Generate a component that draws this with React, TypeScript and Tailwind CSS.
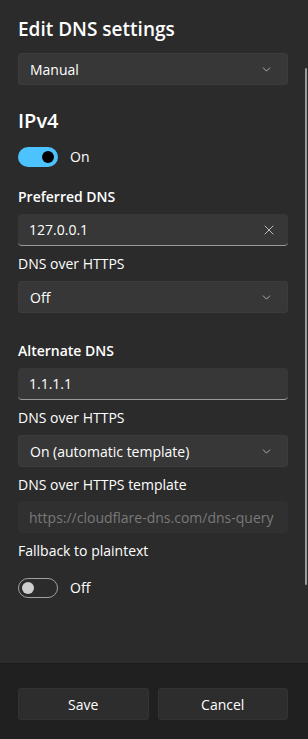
import { ChevronDown, X } from 'lucide-react';

const font = { fontFamily: '"Segoe UI", "Open Sans", "Noto Sans", sans-serif' };

const Dropdown = ({ value }: { value: string }) => (
  <div className="flex h-8 items-center justify-between rounded-[4px] bg-[#373737] pl-3 pr-[15px] text-[14px] text-white shadow-[inset_0_0_0_1px_#3c3c3c]">
    <span>{value}</span>
    <ChevronDown size={13} strokeWidth={1.4} className="text-[#cfcfcf]" />
  </div>
);

const TextBox = ({ value, clear }: { value: string; clear?: boolean }) => (
  <div className="flex h-8 items-center justify-between rounded-[4px] border-b border-b-[#9a9a9a] bg-[#373737] pl-[11px] pr-[11px] text-[14px] text-white">
    <span>{value}</span>
    {clear && <X size={16} strokeWidth={1.3} className="text-[#d0d0d0]" />}
  </div>
);

const Toggle = ({ on }: { on: boolean }) =>
  on ? (
    <div className="flex h-5 w-10 items-center justify-end rounded-full bg-[#4cc2ff] pr-1">
      <div className="h-3 w-3 rounded-full bg-black" />
    </div>
  ) : (
    <div className="flex h-5 w-10 items-center rounded-full border border-[#a0a0a0] pl-[3px]">
      <div className="h-3 w-3 rounded-full bg-[#cecece]" />
    </div>
  );

const App = () => {
  return (
    <div
      className="relative flex h-[739px] w-[308px] flex-col overflow-hidden bg-[#2b2b2b] text-white"
      style={font}
    >
      <div className="flex flex-1 flex-col pl-[18px] pr-[20px] pt-[15px]">
        <h1 className="h-7 text-[19px] font-semibold leading-7">Edit DNS settings</h1>
        <div className="mt-[10px]">
          <Dropdown value="Manual" />
        </div>

        <h2 className="mt-[22px] h-7 text-[20px] font-semibold leading-7">IPv4</h2>
        <div className="mt-[11px] flex items-center gap-3 text-[14px]">
          <Toggle on />
          <span>On</span>
        </div>

        <div className="mt-5 h-5 text-[14px] font-semibold leading-5">Preferred DNS</div>
        <div className="mt-[7px]">
          <TextBox value="127.0.0.1" clear />
        </div>
        <div className="mt-2 h-5 text-[14px] leading-5">DNS over HTTPS</div>
        <div className="mt-[7px]">
          <Dropdown value="Off" />
        </div>

        <div className="mt-7 h-5 text-[14px] font-semibold leading-5">Alternate DNS</div>
        <div className="mt-[7px]">
          <TextBox value="1.1.1.1" />
        </div>
        <div className="mt-2 h-5 text-[14px] leading-5">DNS over HTTPS</div>
        <div className="mt-[7px]">
          <Dropdown value="On (automatic template)" />
        </div>
        <div className="mt-2 h-5 text-[14px] leading-5">DNS over HTTPS template</div>
        <div className="mt-[6px] flex h-8 items-center rounded-[4px] bg-[#303030] pl-[11px] text-[14px] text-[#797979]">
          https://cloudflare-dns.com/dns-query
        </div>
        <div className="mt-2 h-5 text-[14px] leading-5">Fallback to plaintext</div>
        <div className="mt-4 flex items-center gap-3 text-[14px]">
          <Toggle on={false} />
          <span>Off</span>
        </div>
      </div>

      <div className="flex h-[76px] gap-[9px] border-t border-[#1c1c1c] bg-[#202020] pl-[18px] pr-[20px] pt-6">
        <button className="h-8 flex-1 rounded-[4px] bg-[#2d2d2d] text-[14px] text-white shadow-[inset_0_0_0_1px_#333]">
          Save
        </button>
        <button className="h-8 flex-1 rounded-[4px] bg-[#2d2d2d] text-[14px] text-white shadow-[inset_0_0_0_1px_#333]">
          Cancel
        </button>
      </div>

      <div className="absolute right-[1px] top-[68px] h-[517px] w-[2px] rounded-full bg-[#9a9a9a]" />
    </div>
  );
};

export default App;
